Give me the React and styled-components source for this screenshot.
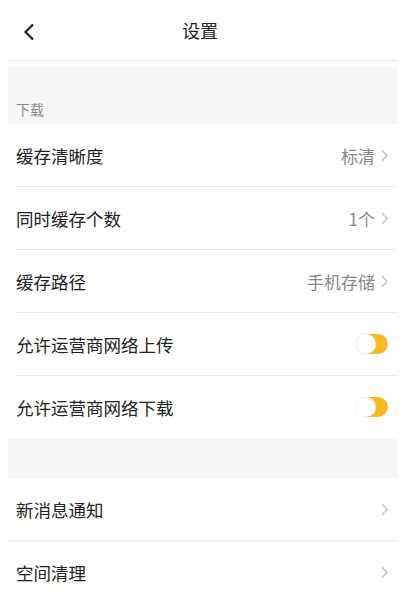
import React from "react";
import styled, { createGlobalStyle } from "styled-components";

const GlobalStyle = createGlobalStyle`
  body {
    margin: 0;
    background: #fff;
    font-family: "Noto Sans CJK SC", "Noto Sans", sans-serif;
  }
`;

const Page = styled.div`
  width: 390px;
  margin-left: 8px;
  background: #fff;
`;

const Header = styled.div`
  position: relative;
  height: 60px;
  display: flex;
  align-items: center;
  justify-content: center;
  border-bottom: 1px solid #e4e4e4;
  margin-bottom: 6px;
`;

const BackButton = styled.button`
  position: absolute;
  left: 0;
  top: 13px;
  width: 34px;
  height: 38px;
  border: none;
  background: #fdfdfd;
  display: flex;
  align-items: center;
  justify-content: center;
  padding: 0 0 0 8px;
`;

const Title = styled.h1`
  margin: 0;
  font-size: 18px;
  font-weight: 400;
  color: #222;
  transform: translateX(-3px);
`;

const SectionHead = styled.div`
  background: #f5f6f8;
  height: ${(p) => p.h}px;
  display: flex;
  align-items: flex-end;
  padding: 0 8px 5px;
  box-sizing: border-box;
  font-size: 14px;
  color: #888;
`;

const Row = styled.div`
  height: 62px;
  display: flex;
  align-items: center;
  padding-right: 10px;
  margin-left: ${(p) => (p.inset ? 8 : 0)}px;
  padding-left: ${(p) => (p.inset ? 0 : 8)}px;
  border-bottom: ${(p) => (p.last ? "none" : "1px solid #e8e8e8")};
`;

const Label = styled.span`
  flex: 1;
  font-size: 17.5px;
  color: #222;
`;

const Value = styled.span`
  font-size: 17px;
  color: #888;
  margin-right: 6px;
`;

const Switch = styled.div`
  width: 32px;
  height: 20px;
  border-radius: 10px;
  background: #fbb827;
  position: relative;
  &::after {
    content: "";
    position: absolute;
    left: 0;
    top: 0;
    width: 20px;
    height: 20px;
    border-radius: 50%;
    background: #fff;
    box-shadow: 0 0 1px rgba(0, 0, 0, 0.1);
  }
`;

const Chevron = () => (
  <svg width="7" height="13" viewBox="0 0 7 13" fill="none">
    <path d="M1 1l5 5.5L1 12" stroke="#bcbcbc" strokeWidth="1.2" />
  </svg>
);

const Back = () => (
  <svg width="12" height="18" viewBox="0 0 12 18" fill="none">
    <path d="M10 1.5L2.5 9l7.5 7.5" stroke="#222" strokeWidth="2.2" />
  </svg>
);

const downloadRows = [
  { label: "缓存清晰度", value: "标清" },
  { label: "同时缓存个数", value: "1个" },
  { label: "缓存路径", value: "手机存储" },
  { label: "允许运营商网络上传", toggle: true },
  { label: "允许运营商网络下载", toggle: true },
];

const otherRows = [{ label: "新消息通知" }, { label: "空间清理" }];

export default function App() {
  return (
    <>
      <GlobalStyle />
      <Page>
        <Header>
          <BackButton>
            <Back />
          </BackButton>
          <Title>设置</Title>
        </Header>
        <SectionHead h={57}>下载</SectionHead>
        {downloadRows.map((r, i) => (
          <Row key={r.label} inset last={i === downloadRows.length - 1}>
            <Label>{r.label}</Label>
            {r.toggle ? (
              <Switch />
            ) : (
              <>
                <Value>{r.value}</Value>
                <Chevron />
              </>
            )}
          </Row>
        ))}
        <SectionHead h={40} />
        {otherRows.map((r, i) => (
          <Row key={r.label} last={i === otherRows.length - 1}>
            <Label>{r.label}</Label>
            <Chevron />
          </Row>
        ))}
      </Page>
    </>
  );
}
